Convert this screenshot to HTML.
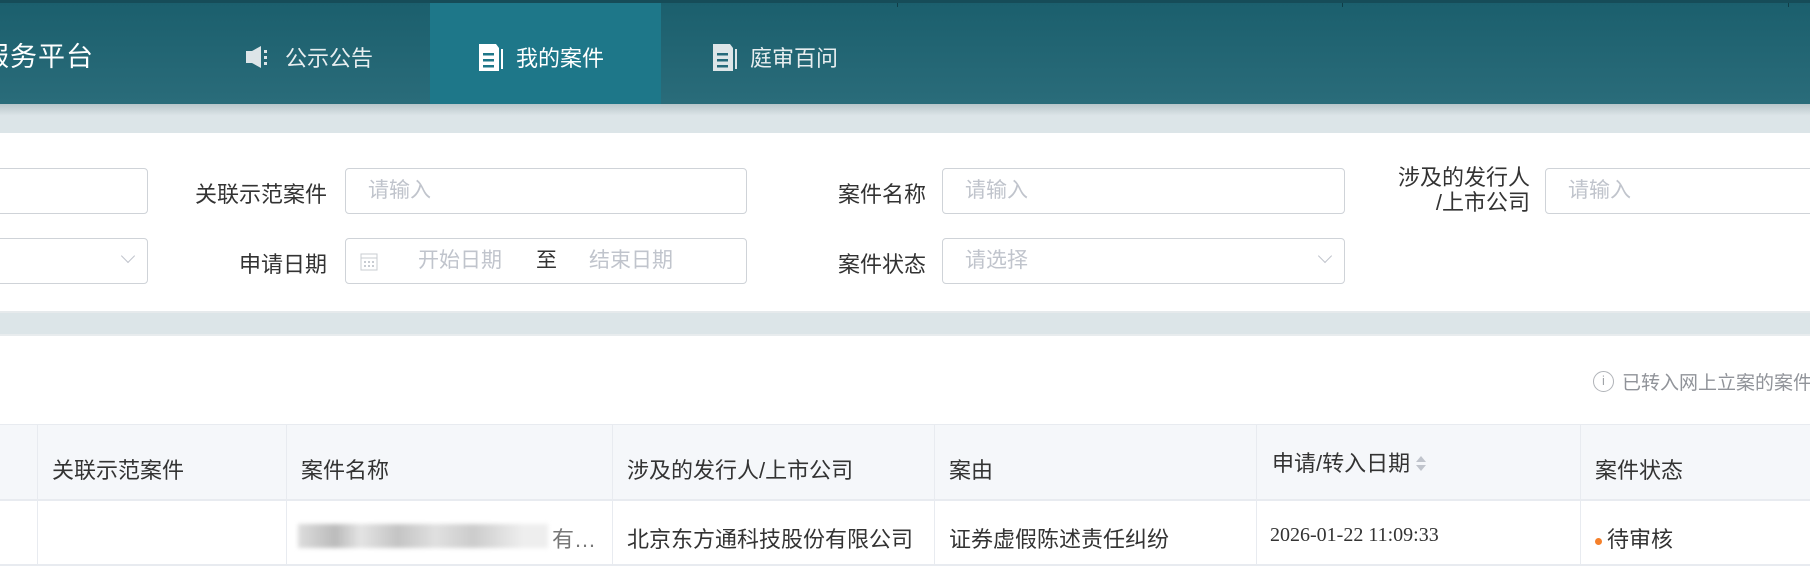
<!DOCTYPE html>
<html><head><meta charset="utf-8"><style>
*{box-sizing:border-box;margin:0;padding:0}
body{width:1810px;height:566px;overflow:hidden;background:#fff;font-family:"Liberation Sans","Noto Sans CJK SC",sans-serif;position:relative}
.hdr{position:absolute;left:0;top:0;width:1810px;height:104px;background:linear-gradient(#1b5f6d,#2a6c7a);border-top:3px solid #164c58}
.hdr .t{position:absolute;top:0;width:1px;height:4px;background:#0f3d47}
.logo{position:absolute;left:-18px;top:32px;color:#fff;font-size:27px;letter-spacing:1px}
.act{position:absolute;left:430px;top:0;width:231px;height:104px;background:#1e7789}
.nav{position:absolute;top:38px;color:#e8eef0;font-size:22px;display:flex;align-items:center}
.nav svg{margin-right:12px}
.band{position:absolute;left:0;width:1810px;background:#dce5e8}
.lbl{position:absolute;color:#333;font-size:22px;text-align:right}
.inp{position:absolute;border:1px solid #cfd3d8;border-radius:4px;height:46px;color:#c0c4cc;font-size:21px;line-height:44px;padding-left:22px}
.arrow{position:absolute;right:14px;top:12px;width:10px;height:10px;border-right:1px solid #c0c4cc;border-bottom:1px solid #c0c4cc;transform:rotate(45deg)}
.th{position:absolute;top:424px;height:77px;background:#f5f7fa;width:1810px;border-top:1px solid #e8ebf0;border-bottom:2px solid #e8ebf0}
.vl{position:absolute;top:424px;height:142px;width:1px;background:#e8ebf0}
.h{position:absolute;top:453px;font-size:22px;color:#333}
.c{position:absolute;top:522px;font-size:22px;color:#333}
</style></head><body>
<div class="hdr">
<div class="t" style="left:450px"></div><div class="t" style="left:897px"></div><div class="t" style="left:1342px"></div><div class="t" style="left:1788px"></div>
<div class="act"></div>
<div class="logo">服务平台</div>
<div class="nav" style="left:245px"><svg width="28" height="24" viewBox="0 0 28 24"><rect x="1" y="6" width="6" height="12" fill="#dde5e8"/><path d="M7 6 L16 1 V23 L7 18Z" fill="#dde5e8"/><rect x="19" y="5" width="3" height="3" fill="#dde5e8"/><rect x="19" y="11" width="3" height="3" fill="#dde5e8"/><rect x="19" y="17" width="3" height="3" fill="#dde5e8"/></svg>公示公告</div>
<div class="nav" style="left:479px;color:#fff"><svg width="25" height="27" viewBox="0 0 25 27"><path d="M0 0H17L20 4V27H0Z" fill="#fff"/><rect x="22" y="5" width="2" height="20" fill="#fff"/><rect x="4" y="9" width="11" height="2.5" fill="#1e7789"/><rect x="4" y="15" width="11" height="2.5" fill="#1e7789"/><rect x="4" y="21" width="11" height="2.5" fill="#1e7789"/></svg>我的案件</div>
<div class="nav" style="left:713px"><svg width="25" height="27" viewBox="0 0 25 27"><path d="M0 0H17L20 4V27H0Z" fill="#dde5e8"/><rect x="22" y="5" width="2" height="20" fill="#dde5e8"/><rect x="4" y="9" width="11" height="2.5" fill="#25697a"/><rect x="4" y="15" width="11" height="2.5" fill="#25697a"/><rect x="4" y="21" width="11" height="2.5" fill="#25697a"/></svg>庭审百问</div>
</div>
<div class="band" style="top:104px;height:29px;background:linear-gradient(#b9c6ca,#dce5e8 40%)"></div>

<div class="inp" style="left:-10px;top:168px;width:158px"></div>
<div class="lbl" style="left:180px;top:177px;width:147px">关联示范案件</div>
<div class="inp" style="left:345px;top:168px;width:402px">请输入</div>
<div class="lbl" style="left:800px;top:177px;width:126px">案件名称</div>
<div class="inp" style="left:942px;top:168px;width:403px">请输入</div>
<div class="lbl" style="left:1370px;top:165px;width:160px;line-height:25px">涉及的发行人<br>/上市公司</div>
<div class="inp" style="left:1545px;top:168px;width:300px">请输入</div>

<div class="inp" style="left:-10px;top:238px;width:158px"><div class="arrow"></div></div>
<div class="lbl" style="left:200px;top:247px;width:127px">申请日期</div>
<div class="inp" style="left:345px;top:238px;width:402px;padding-left:0">
<svg style="position:absolute;left:14px;top:12px" width="18" height="20" viewBox="0 0 18 20"><rect x="1" y="3" width="16" height="16" fill="none" stroke="#c8ccd2"/><line x1="1" y1="7" x2="17" y2="7" stroke="#c8ccd2"/><g fill="#c8ccd2"><rect x="4" y="10" width="2" height="2"/><rect x="8" y="10" width="2" height="2"/><rect x="12" y="10" width="2" height="2"/><rect x="4" y="14" width="2" height="2"/><rect x="8" y="14" width="2" height="2"/><rect x="12" y="14" width="2" height="2"/></g></svg>
<span style="position:absolute;left:72px">开始日期</span><span style="position:absolute;left:190px;color:#333">至</span><span style="position:absolute;left:243px">结束日期</span></div>
<div class="lbl" style="left:800px;top:247px;width:126px">案件状态</div>
<div class="inp" style="left:942px;top:238px;width:403px">请选择<div class="arrow"></div></div>

<div class="band" style="top:311px;height:25px;border-top:2px solid #e6eaec;border-bottom:2px solid #e8ecee"></div>

<div style="position:absolute;left:1593px;top:368px;font-size:19px;color:#909399;display:flex;align-items:center;white-space:nowrap"><span style="display:inline-block;width:21px;height:21px;border:1.5px solid #b0b3b8;border-radius:50%;text-align:center;line-height:18px;font-size:13px;color:#a0a3a8;margin-right:8px">i</span>已转入网上立案的案件列表</div>

<div class="th"></div>
<div class="vl" style="left:37px"></div><div class="vl" style="left:286px"></div><div class="vl" style="left:612px"></div><div class="vl" style="left:934px"></div><div class="vl" style="left:1256px"></div><div class="vl" style="left:1580px"></div>
<div style="position:absolute;left:0;top:564px;width:1810px;height:2px;background:#e8ebf0"></div>
<div class="h" style="left:52px">关联示范案件</div>
<div class="h" style="left:301px">案件名称</div>
<div class="h" style="left:627px">涉及的发行人/上市公司</div>
<div class="h" style="left:949px">案由</div>
<div class="h" style="left:1272px;top:446px">申请/转入日期 <span style="display:inline-block;vertical-align:middle;width:10px;position:relative;top:-2px"><span style="display:block;border:5px solid transparent;border-bottom:6px solid #c0c4cc;border-top:0;margin-bottom:3px"></span><span style="display:block;border:5px solid transparent;border-top:6px solid #c0c4cc;border-bottom:0"></span></span></div>
<div class="h" style="left:1595px">案件状态</div>

<div style="position:absolute;left:298px;top:524px;width:250px;height:24px;background:linear-gradient(90deg,#ddd,#bbb 15%,#e4e4e4 25%,#c4c4c4 40%,#e0e0e0 55%,#ccc 70%,#eee 90%);filter:blur(2px)"></div>
<div class="c" style="left:552px;color:#777">有…</div>
<div class="c" style="left:627px">北京东方通科技股份有限公司</div>
<div class="c" style="left:949px">证券虚假陈述责任纠纷</div>
<div class="c" style="left:1270px;font-family:'Liberation Serif',serif;font-size:20px;top:524px">2026-01-22 11:09:33</div>
<div class="c" style="left:1595px"><span style="display:inline-block;width:7px;height:7px;border-radius:50%;background:#f5802a;vertical-align:middle;margin-right:5px"></span>待审核</div>
</body></html>
